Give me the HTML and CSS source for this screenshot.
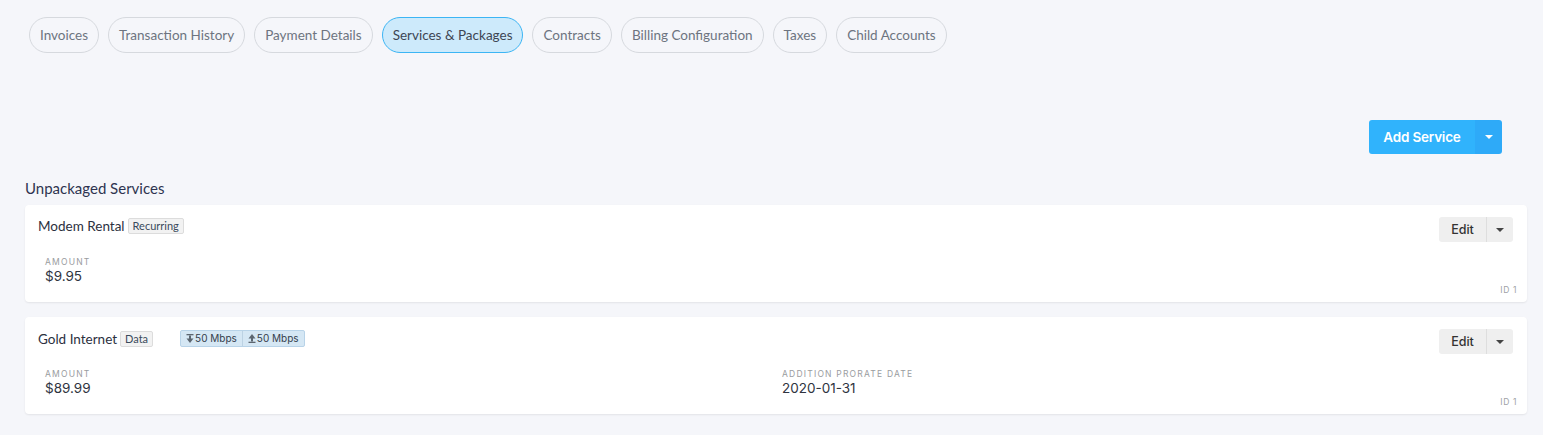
FILE: index.html
```html
<!DOCTYPE html>
<html lang="en">
<head>
    <meta charset="UTF-8">
    <meta name="viewport" content="width=device-width, initial-scale=1.0">
    <title>Services &amp; Packages</title>
    <link rel="stylesheet" href="styles.css">
</head>
<body>
    <nav class="tabs">
        <a class="tab">Invoices</a>
        <a class="tab">Transaction History</a>
        <a class="tab">Payment Details</a>
        <a class="tab active">Services &amp; Packages</a>
        <a class="tab">Contracts</a>
        <a class="tab">Billing Configuration</a>
        <a class="tab">Taxes</a>
        <a class="tab">Child Accounts</a>
    </nav>

    <div class="toolbar">
        <div class="split-btn primary">
            <button class="btn-main">Add Service</button>
            <button class="btn-caret"><span class="caret"></span></button>
        </div>
    </div>

    <h2 class="section-title">Unpackaged Services</h2>

    <div class="card">
        <div class="card-head">
            <div class="card-title">
                <span class="name">Modem Rental</span>
                <span class="tag">Recurring</span>
            </div>
            <div class="split-btn light">
                <button class="btn-main">Edit</button>
                <button class="btn-caret"><span class="caret"></span></button>
            </div>
        </div>
        <div class="fields">
            <div class="field">
                <div class="label">Amount</div>
                <div class="value">$9.95</div>
            </div>
        </div>
        <div class="card-id">ID 1</div>
    </div>

    <div class="card">
        <div class="card-head">
            <div class="card-title">
                <span class="name">Gold Internet</span>
                <span class="tag">Data</span>
                <span class="speed">
                    <span class="speed-part">
                        <svg width="8" height="9" viewBox="0 0 8 9"><rect x="0.5" y="0" width="7" height="1.3"/><rect x="3" y="1.5" width="2" height="3.5"/><path d="M0.5 4.5h7L4 9z"/></svg>50 Mbps
                    </span>
                    <span class="speed-part">
                        <svg width="8" height="9" viewBox="0 0 8 9"><path d="M0.5 4.5h7L4 0z"/><rect x="3" y="4" width="2" height="3.5"/><rect x="0.5" y="7.7" width="7" height="1.3"/></svg>50 Mbps
                    </span>
                </span>
            </div>
            <div class="split-btn light">
                <button class="btn-main">Edit</button>
                <button class="btn-caret"><span class="caret"></span></button>
            </div>
        </div>
        <div class="fields">
            <div class="field">
                <div class="label">Amount</div>
                <div class="value">$89.99</div>
            </div>
            <div class="field">
                <div class="label">Addition Prorate Date</div>
                <div class="value">2020-01-31</div>
            </div>
        </div>
        <div class="card-id">ID 1</div>
    </div>
</body>
</html>
```

FILE: styles.css
```css
body {
    margin: 0;
    padding: 17px 16px 20px 25px;
    background-color: #f5f6fa;
    font-family: Lato, "Open Sans", sans-serif;
    color: #2e3446;
}

.tabs {
    display: flex;
    gap: 9px;
    margin-left: 4px;
}

.tab {
    height: 34px;
    padding: 0 10px;
    border: 1px solid #d6d9de;
    border-radius: 18px;
    display: flex;
    align-items: center;
    font-size: 13.5px;
    color: #6d7480;
    cursor: pointer;
}

.tab.active {
    background-color: #cdeafb;
    border-color: #3cb5f4;
    color: #3d4654;
}

.toolbar {
    display: flex;
    justify-content: flex-end;
    margin-top: 67px;
    margin-right: 25px;
}

.split-btn {
    display: flex;
    border-radius: 3px;
    overflow: hidden;
}

.split-btn button {
    border: none;
    font-family: Inter, "Liberation Sans", sans-serif;
    cursor: pointer;
    display: flex;
    align-items: center;
    justify-content: center;
}

.split-btn.primary .btn-main {
    height: 34px;
    width: 106px;
    background-color: #30b3fc;
    color: #fff;
    font-weight: 600;
    font-size: 13.5px;
    letter-spacing: -0.2px;
}

.split-btn.primary .btn-caret {
    width: 27px;
    background-color: #2eaaf8;
}

.split-btn.primary .caret {
    border-top-color: #fff;
}

.caret {
    width: 0;
    height: 0;
    border-left: 4px solid transparent;
    border-right: 4px solid transparent;
    border-top: 4px solid #444;
}

.section-title {
    margin: 25px 0 8px;
    font-size: 15px;
    font-weight: 400;
    color: #2e3450;
}

.card {
    position: relative;
    background-color: #fff;
    border-radius: 4px;
    box-shadow: 0 1px 2px rgba(0, 0, 0, 0.08);
    padding: 12px 14px 7px 13px;
    margin-bottom: 15px;
}

.card-head {
    display: flex;
    justify-content: space-between;
    align-items: flex-start;
}

.card-title {
    display: flex;
    align-items: center;
    gap: 3px;
    padding-top: 1px;
}

.name {
    font-size: 13.5px;
    color: #2b3040;
}

.tag {
    font-size: 11px;
    color: #3a4a5c;
    background-color: #f2f2f2;
    border: 1px solid #dcdcdc;
    border-radius: 2px;
    padding: 1px 4px;
    line-height: 12px;
}

.speed {
    display: flex;
    margin-left: 24px;
    background-color: #d5e7f4;
    border: 1px solid #b8d3e8;
    border-radius: 2px;
    font-family: Inter, sans-serif;
    font-size: 10px;
    color: #34404c;
}

.speed-part {
    display: flex;
    align-items: center;
    gap: 1px;
    padding: 1px 5px 1px 5px;
    line-height: 13px;
}

.speed-part + .speed-part {
    border-left: 1px solid #bcd2e3;
}

.speed svg {
    fill: #5c6670;
}

.split-btn.light .btn-main {
    height: 25px;
    width: 47px;
    background-color: #efefef;
    color: #333;
    font-size: 12.5px;
    font-weight: 500;
}

.split-btn.light .btn-caret {
    width: 27px;
    background-color: #efefef;
    border-left: 1px solid #dedede;
}

.fields {
    display: grid;
    grid-template-columns: 1fr 1fr;
    padding: 15px 0 0 7px;
    margin-right: -6px;
}

.label {
    font-family: Inter, sans-serif;
    font-size: 8.5px;
    letter-spacing: 1.2px;
    text-transform: uppercase;
    color: #9a9ca0;
}

.value {
    font-family: Inter, sans-serif;
    font-size: 13.5px;
    color: #2f3440;
    margin-top: 1px;
}

.card-id {
    text-align: right;
    font-family: Inter, sans-serif;
    font-size: 8.5px;
    letter-spacing: 0.6px;
    color: #a0a2a6;
    margin-top: 1px;
    margin-right: -4px;
}
```
